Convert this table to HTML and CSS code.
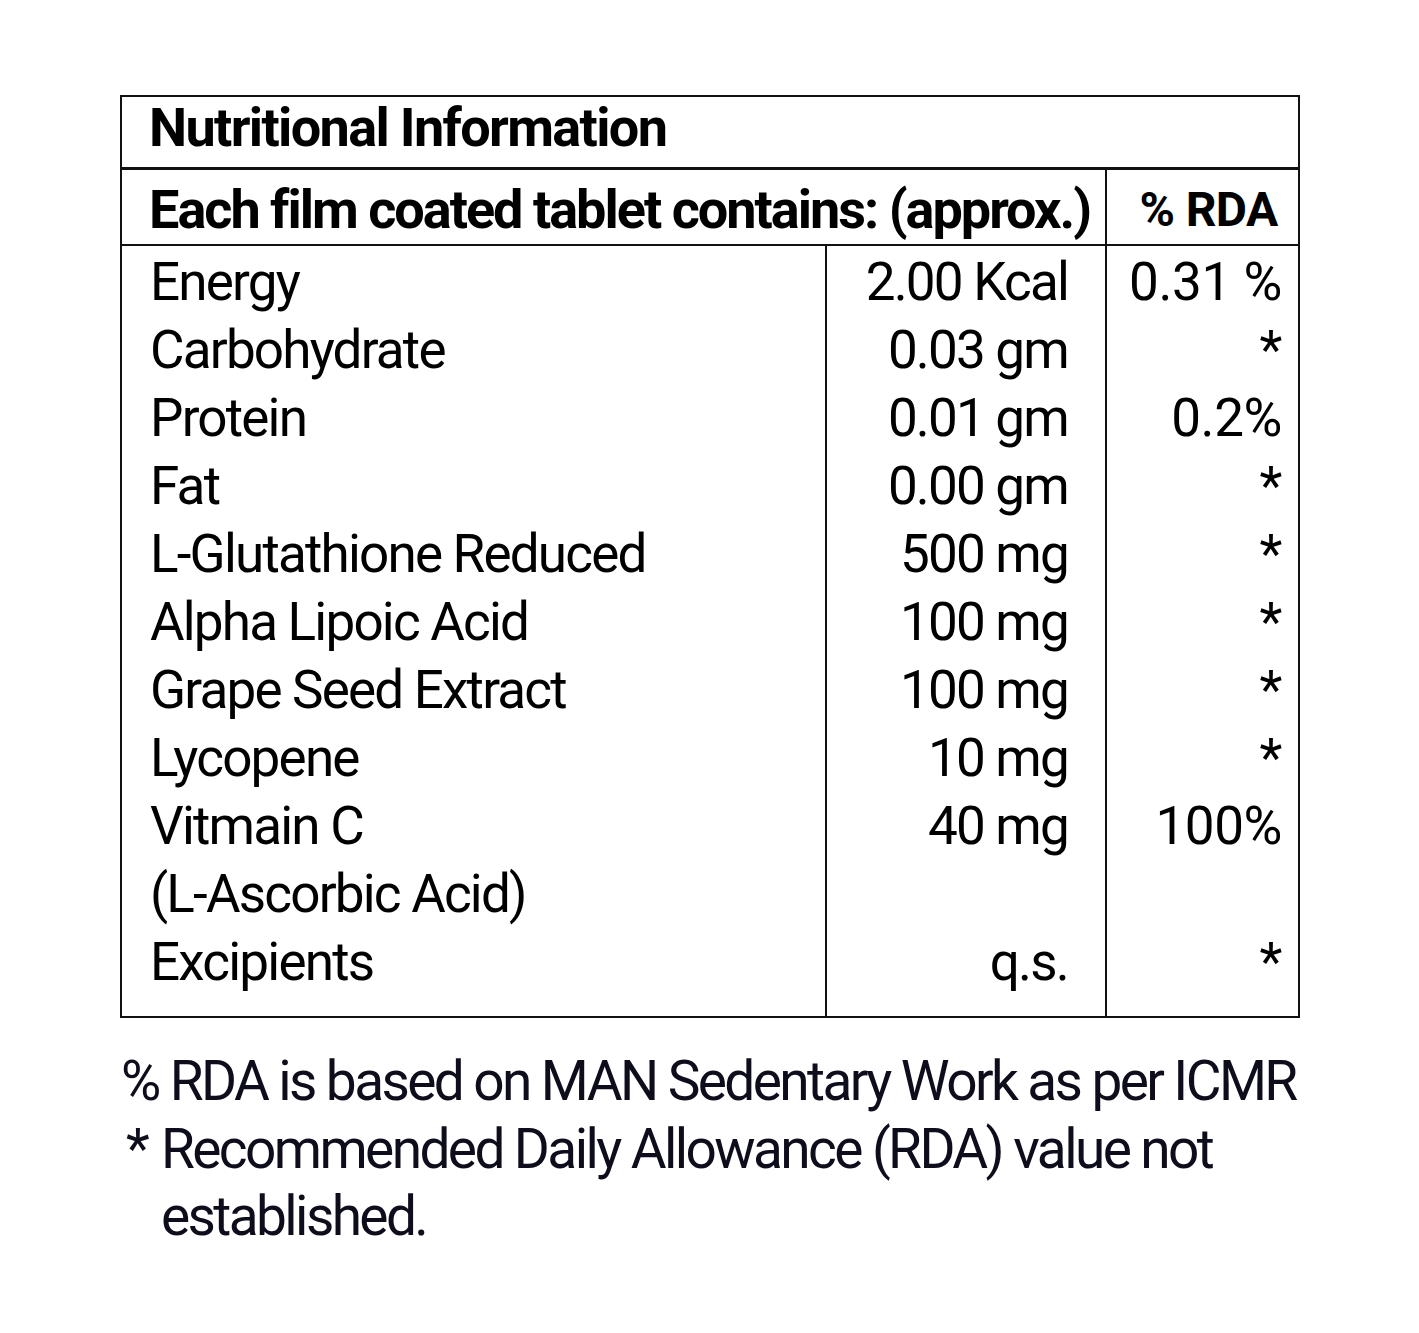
FILE: index.html
```html
<!DOCTYPE html>
<html lang="en">
<head>
<meta charset="utf-8">
<title>Nutritional Information</title>
<link rel="stylesheet" href="styles.css">
</head>
<body>
<main class="label">
  <table class="facts">
    <colgroup>
      <col class="col-name">
      <col class="col-amount">
      <col class="col-rda">
    </colgroup>
    <tr class="title-row">
      <th colspan="3" class="title">Nutritional Information</th>
    </tr>
    <tr class="head-row">
      <th colspan="2" class="head-main">Each film coated tablet contains: (approx.)</th>
      <th class="head-rda">% RDA</th>
    </tr>
    <tr class="body-row">
      <td class="name">
        <div>Energy</div>
        <div>Carbohydrate</div>
        <div>Protein</div>
        <div>Fat</div>
        <div>L-Glutathione Reduced</div>
        <div>Alpha Lipoic Acid</div>
        <div>Grape Seed Extract</div>
        <div>Lycopene</div>
        <div>Vitmain C</div>
        <div>(L-Ascorbic Acid)</div>
        <div>Excipients</div>
      </td>
      <td class="amount">
        <div>2.00 Kcal</div>
        <div>0.03 gm</div>
        <div>0.01 gm</div>
        <div>0.00 gm</div>
        <div>500 mg</div>
        <div>100 mg</div>
        <div>100 mg</div>
        <div>10 mg</div>
        <div>40 mg</div>
        <div>&nbsp;</div>
        <div>q.s.</div>
      </td>
      <td class="rda">
        <div>0.31 %</div>
        <div>*</div>
        <div>0.2%</div>
        <div>*</div>
        <div>*</div>
        <div>*</div>
        <div>*</div>
        <div>*</div>
        <div>100%</div>
        <div>&nbsp;</div>
        <div>*</div>
      </td>
    </tr>
  </table>
  <div class="notes">
    <p class="note-line">% RDA is based on MAN Sedentary Work as per ICMR</p>
    <p class="note-star"><span class="star">*</span><span class="note-text">Recommended Daily Allowance (RDA) value not established.</span></p>
  </div>
</main>
</body>
</html>
```

FILE: styles.css
```css
html, body {
  margin: 0;
  padding: 0;
  background: #ffffff;
}

body {
  font-family: Roboto, "Liberation Sans", Arial, sans-serif;
  color: #000000;
}

.label {
  padding: 95px 0 0 120px;
  width: 1180px;
}

.facts {
  border-collapse: collapse;
  width: 1178px;
  table-layout: fixed;
}

.col-name { width: 705px; }
.col-amount { width: 280px; }
.col-rda { width: 193px; }

.title-row th,
.head-row th,
.body-row td {
  border: 2px solid #111;
  white-space: nowrap;
}

.title {
  padding: 0 0 8px 27px;
  text-align: left;
  font-weight: 700;
  font-size: 54px;
  letter-spacing: -1.65px;
  line-height: 62px;
  border-bottom-width: 3px !important;
}

.head-main {
  padding: 6px 0 0 27px;
  text-align: left;
  font-weight: 700;
  font-size: 54px;
  letter-spacing: -2px;
  line-height: 68px;
}

.head-rda {
  padding: 6px 0 0 12px;
  text-align: center;
  font-weight: 700;
  font-size: 48px;
  letter-spacing: -0.6px;
  line-height: 68px;
}

.body-row td {
  vertical-align: top;
  font-size: 53px;
  letter-spacing: -1.8px;
  line-height: 68px;
  padding: 2px 0 20px 0;
}

.name {
  padding-left: 28px !important;
  text-align: left;
}

.amount {
  padding-right: 37px !important;
  text-align: right;
}

.body-row .rda {
  padding-right: 16px;
  letter-spacing: -0.4px;
  text-align: right;
}

.notes {
  margin-top: 30px;
  color: #0d0d1c;
  font-size: 55px;
  letter-spacing: -2.6px;
  line-height: 67.5px;
}

.notes p {
  margin: 0;
}

.note-line {
  padding-left: 1px;
  white-space: nowrap;
}

.note-star {
  display: flex;
}

.star {
  width: 35px;
  padding-left: 6px;
  flex: none;
}

.note-text {
  width: 1090px;
}
```
